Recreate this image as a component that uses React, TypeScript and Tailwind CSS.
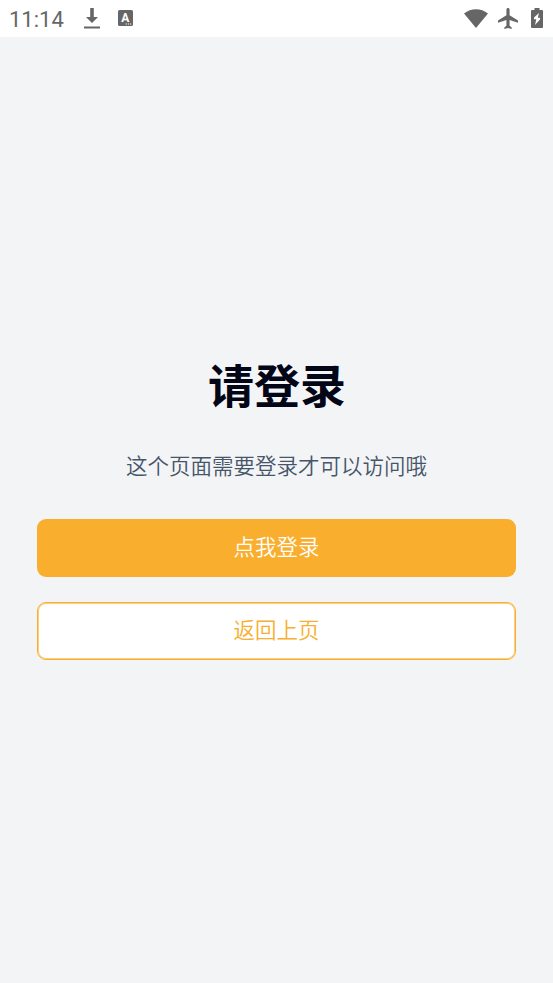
import React from "react";

function StatusBar() {
  return (
    <header className="flex h-[37px] items-center justify-between bg-white pl-[9px] pr-[10px] text-[#666666]">
      <div className="flex items-center">
        <span className="w-[75px] pt-[2px] font-['Roboto',sans-serif] text-[22px] font-[450] leading-none">
          11:14
        </span>
        <svg width="16" height="21" viewBox="0 0 16 21" fill="currentColor">
          <path d="M6.200 0h3.600v9H14l-6 6-6-6h4.200zM0 18.500h16v2H0z" />
        </svg>
        <svg
          className="-mt-px ml-[18px]"
          width="15"
          height="16"
          viewBox="0 0 15 16"
        >
          <rect width="15" height="16" rx="1.500" fill="currentColor" />
          <text
            x="7.200"
            y="12"
            textAnchor="middle"
            fontFamily="Roboto, sans-serif"
            fontSize="12"
            fontWeight="700"
            fill="white"
          >
            A
          </text>
          <path
            d="M7.700 13.500h1.200v1H7.700zM9.900 13.500h1.200v1H9.900zM12.100 13.500h1.200v1h-1.200z"
            fill="white"
          />
        </svg>
      </div>
      <div className="flex items-center">
        <svg width="24" height="19" viewBox="0 0 24 19" fill="currentColor">
          <path d="M0 4.500C7-1.200 17-1.200 24 4.500L12 19z" />
        </svg>
        <svg
          className="ml-[10px]"
          width="20"
          height="21"
          viewBox="2 2 19 20"
          preserveAspectRatio="none"
          fill="currentColor"
        >
          <path d="M21 16v-2l-8-5V3.500C13 2.670 12.330 2 11.500 2S10 2.670 10 3.500V9l-8 5v2l8-2.500V19l-2 1.500V22l3.500-1 3.500 1v-1.500L13 19v-5.500z" />
        </svg>
        <svg
          className="-mt-px ml-[13px]"
          width="12"
          height="20"
          viewBox="0 0 12 20"
          fill="currentColor"
        >
          <path
            fillRule="evenodd"
            d="M3.500 0h5v2H11a1 1 0 0 1 1 1v16a1 1 0 0 1-1 1H1a1 1 0 0 1-1-1V3a1 1 0 0 1 1-1h2.500zM8 5L3 9.500v1.700h2.300L4 17l5-5.500V9.800H6.800z"
          />
        </svg>
      </div>
    </header>
  );
}

function App() {
  return (
    <div className="flex h-[983px] flex-col bg-[#f2f4f6] font-['Noto_Sans_CJK_SC',sans-serif]">
      <StatusBar />
      <main className="flex flex-col items-center px-[37px] pt-[311px]">
        <h1 className="pl-px text-[46px] font-bold leading-[70px] text-[#020617]">
          请登录
        </h1>
        <p className="mt-[31px] text-[21.500px] font-[350] leading-8 text-[#475569]">
          这个页面需要登录才可以访问哦
        </p>
        <button className="mt-[38px] h-[58px] w-full rounded-[9px] bg-[#f9ae2e] pb-[3px] text-[21.500px] font-[350] text-white">
          点我登录
        </button>
        <button className="mt-[25px] h-[58px] w-full rounded-[9px] border border-[#f9ae2e] bg-white pb-[3px] text-[21.500px] font-[350] text-[#f9ae2e] inset-ring-1 inset-ring-[#f9ae2e]/60">
          返回上页
        </button>
      </main>
    </div>
  );
}

export default App;
